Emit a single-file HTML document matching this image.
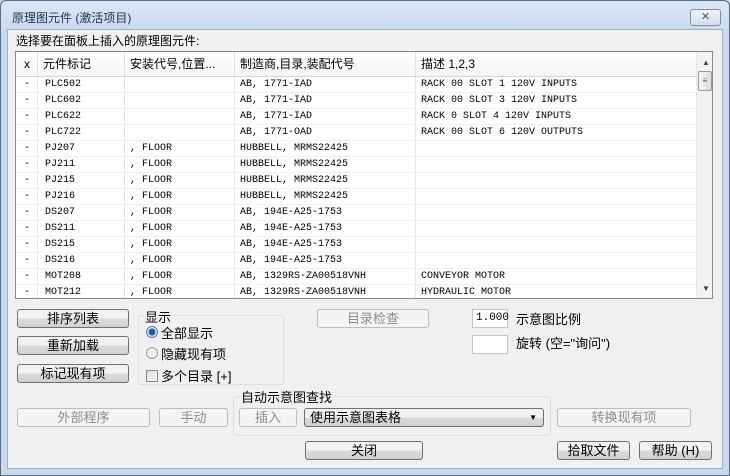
<!DOCTYPE html>
<html><head><meta charset="utf-8"><style>
*{box-sizing:border-box;margin:0;padding:0}
body{width:730px;height:476px;overflow:hidden;background:#c7d8ed;font-family:"Liberation Sans","Noto Sans CJK SC",sans-serif;font-size:12px;color:#000;position:relative}
.frame{position:absolute;left:0;top:0;width:730px;height:476px;border:1px solid #5a6a80;border-radius:6px 6px 0 0;background:linear-gradient(#dbe7f5,#c9daef 30px,#c9daef)}
.client{position:absolute;left:7px;top:29px;width:716px;height:440px;background:#f0f0f0;border:1px solid #9fb0c6}
.a{position:absolute;white-space:nowrap}
.title{left:12px;top:9px;font-size:12px;color:#1e3250}
.xbtn{left:690px;top:9px;width:31px;height:17px;border:1px solid #7f8fa6;border-radius:3px;background:linear-gradient(#eef3fa,#d3deec);font-size:11px;color:#555;text-align:center;line-height:14px}
.tbl{left:15px;top:51px;width:698px;height:248px;border:1px solid #828790;background:#fff;overflow:hidden}
.hdr{position:absolute;left:0;top:0;width:680px;height:25px;background:linear-gradient(#fff,#f4f5f7);border-bottom:1px solid #d5d5d5}
.row{position:absolute;left:0;width:680px;height:16px;border-bottom:1px solid #f0f0f0;font-family:"Liberation Mono","Noto Sans CJK SC",monospace;font-size:10px;line-height:16px}
.c{position:absolute;top:0;height:100%;border-right:1px solid #e5e5e5;padding-left:5px;overflow:hidden}
.hdr .c{line-height:25px;font-size:12px;font-family:"Liberation Sans","Noto Sans CJK SC",sans-serif;border-right:1px solid #e0e0e0}
.sb{position:absolute;left:680px;top:0;width:17px;height:246px;background:#f3f3f3;border-left:1px solid #e6e6e6}
.btn{position:absolute;height:19px;border:1px solid #707070;border-radius:3px;background:linear-gradient(#f2f2f2 50%,#dcdcdc 50%,#d0d0d0);text-align:center;line-height:17px;font-size:13px}
.dis{border-color:#bcbcbc;background:#f4f4f4;color:#8d8d8d}
.grp{position:absolute;border:1px solid #d5dfe5;border-radius:3px}
.inp{position:absolute;background:#fff;border:1px solid #c5c5c5;font-family:"Liberation Mono",monospace;font-size:11px;line-height:17px;padding-left:3px}
</style></head><body>
<div class="frame"></div>
<div class="a title">原理图元件 (激活项目)</div>
<div class="a xbtn">✕</div>
<div class="client"></div>
<div class="a" style="left:16px;top:32px;font-size:12px">选择要在面板上插入的原理图元件:</div>
<div class="a tbl">
 <div class="hdr">
  <div class="c" style="left:0;width:22px;padding-left:8px">x</div>
  <div class="c" style="left:22px;width:87px">元件标记</div>
  <div class="c" style="left:109px;width:110px">安装代号,位置...</div>
  <div class="c" style="left:219px;width:181px">制造商,目录,装配代号</div>
  <div class="c" style="left:400px;width:280px;border-right:none">描述 1,2,3</div>
 </div>
 <div id="rows"></div>
 <div class="sb">
  <div style="position:absolute;left:5px;top:6px;font-size:8px;color:#444">▲</div>
  <div style="position:absolute;left:1px;top:19px;width:14px;height:20px;border:1px solid #9a9a9a;border-radius:2px;background:linear-gradient(90deg,#f5f5f5,#dcdcdc);font-size:8px;text-align:center;line-height:18px;color:#555">≡</div>
  <div style="position:absolute;left:5px;top:232px;font-size:8px;color:#444">▼</div>
 </div>
</div>
<script>
var d=[["PLC502","","AB, 1771-IAD","RACK 00 SLOT 1 120V INPUTS"],["PLC602","","AB, 1771-IAD","RACK 00 SLOT 3 120V INPUTS"],["PLC622","","AB, 1771-IAD","RACK 0 SLOT 4 120V INPUTS"],["PLC722","","AB, 1771-OAD","RACK 00 SLOT 6 120V OUTPUTS"],["PJ207",", FLOOR","HUBBELL, MRMS22425",""],["PJ211",", FLOOR","HUBBELL, MRMS22425",""],["PJ215",", FLOOR","HUBBELL, MRMS22425",""],["PJ216",", FLOOR","HUBBELL, MRMS22425",""],["DS207",", FLOOR","AB, 194E-A25-1753",""],["DS211",", FLOOR","AB, 194E-A25-1753",""],["DS215",", FLOOR","AB, 194E-A25-1753",""],["DS216",", FLOOR","AB, 194E-A25-1753",""],["MOT208",", FLOOR","AB, 1329RS-ZA00518VNH","CONVEYOR MOTOR"],["MOT212",", FLOOR","AB, 1329RS-ZA00518VNH","HYDRAULIC MOTOR"]];
var h="";d.forEach(function(r,i){h+='<div class="row" style="top:'+(25+i*16)+'px"><div class="c" style="left:0;width:22px;padding-left:8px">-</div><div class="c" style="left:22px;width:87px;padding-left:7px">'+r[0]+'</div><div class="c" style="left:109px;width:110px">'+r[1]+'</div><div class="c" style="left:219px;width:181px">'+r[2]+'</div><div class="c" style="left:400px;width:280px;border-right:none">'+r[3]+'</div></div>'});
document.getElementById("rows").innerHTML=h;
</script>
<div class="btn" style="left:17px;top:309px;width:112px">排序列表</div>
<div class="btn" style="left:17px;top:336px;width:112px">重新加载</div>
<div class="btn" style="left:17px;top:364px;width:112px">标记现有项</div>
<div class="grp" style="left:138px;top:315px;width:146px;height:70px"></div>
<div class="a" style="left:144px;top:307px;background:#f0f0f0;padding:0 1px;font-size:13px">显示</div>
<div class="a" style="left:146px;top:326px;width:12px;height:12px;border-radius:50%;border:1px solid #5a7fa8;background:radial-gradient(circle,#1f5fa8 0 3px,#dfe9f5 4px)"></div>
<div class="a" style="left:161px;top:323px;font-size:13px">全部显示</div>
<div class="a" style="left:146px;top:347px;width:12px;height:12px;border-radius:50%;border:1px solid #9a9a9a;background:#f0f0f0"></div>
<div class="a" style="left:161px;top:344px;font-size:13px">隐藏现有项</div>
<div class="a" style="left:146px;top:370px;width:12px;height:12px;border:1px solid #8a8a8a;background:linear-gradient(135deg,#ddd,#fafafa)"></div>
<div class="a" style="left:161px;top:366px;font-size:13px">多个目录 [+]</div>
<div class="btn dis" style="left:317px;top:309px;width:112px">目录检查</div>
<div class="inp" style="left:472px;top:309px;width:36px;height:19px">1.000</div>
<div class="a" style="left:516px;top:309px;font-size:13px">示意图比例</div>
<div class="inp" style="left:472px;top:335px;width:36px;height:19px"></div>
<div class="a" style="left:516px;top:333px;font-size:13px">旋转 (空="询问")</div>
<div class="grp" style="left:233px;top:396px;width:318px;height:40px"></div>
<div class="a" style="left:240px;top:387px;background:#f0f0f0;padding:0 1px;font-size:13px">自动示意图查找</div>
<div class="btn dis" style="left:17px;top:408px;width:133px">外部程序</div>
<div class="btn dis" style="left:159px;top:408px;width:69px">手动</div>
<div class="btn dis" style="left:239px;top:408px;width:58px">插入</div>
<div class="btn" style="left:304px;top:408px;width:240px;text-align:left;padding-left:5px">使用示意图表格<span style="position:absolute;right:6px;top:0;font-size:8px">▼</span></div>
<div class="btn dis" style="left:557px;top:408px;width:134px">转换现有项</div>
<div class="btn" style="left:305px;top:441px;width:118px">关闭</div>
<div class="btn" style="left:557px;top:441px;width:73px">拾取文件</div>
<div class="btn" style="left:639px;top:441px;width:73px">帮助 (H)</div>
</body></html>
